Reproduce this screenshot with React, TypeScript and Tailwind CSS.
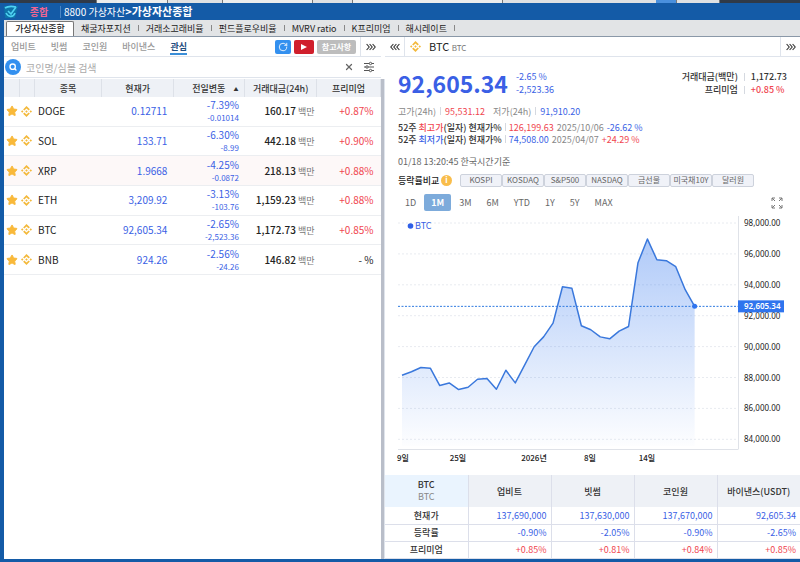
import { RotateCw, Search, Star, X } from "lucide-react";
import { SiBinance } from "react-icons/si";

const blue = "text-[#3a5fe5]";
const red = "text-[#f0464f]";

const menuTabs = [
  "채굴자포지션",
  "거래소고래비율",
  "펀드플로우비율",
  "MVRV ratio",
  "K프리미엄",
  "해시레이트",
];

const exchanges = ["업비트", "빗썸", "코인원", "바이낸스", "관심"];

const coins = [
  { name: "DOGE", price: "0.12711", rate: "-7.39%", diff: "-0.01014", volume: "160.17", premium: "+0.87%" },
  { name: "SOL", price: "133.71", rate: "-6.30%", diff: "-8.99", volume: "442.18", premium: "+0.90%" },
  { name: "XRP", price: "1.9668", rate: "-4.25%", diff: "-0.0872", volume: "218.13", premium: "+0.88%" },
  { name: "ETH", price: "3,209.92", rate: "-3.13%", diff: "-103.76", volume: "1,159.23", premium: "+0.88%" },
  { name: "BTC", price: "92,605.34", rate: "-2.65%", diff: "-2,523.36", volume: "1,172.73", premium: "+0.85%" },
  { name: "BNB", price: "924.26", rate: "-2.56%", diff: "-24.26", volume: "146.82", premium: "- %" },
];

const compareTargets = ["KOSPI", "KOSDAQ", "S&P500", "NASDAQ", "금선물", "미국채10Y", "달러원"];
const ranges = ["1D", "1M", "3M", "6M", "YTD", "1Y", "5Y", "MAX"];

const prices = [
  88150, 88370, 88650, 88600, 87480, 87650, 87220, 87370, 87890, 87930, 87240,
  88470, 87650, 88820, 89990, 90630, 91520, 93870, 93770, 91350, 91090, 90630,
  90505, 91000, 91300, 95430, 96960, 95620, 95560, 95170, 93680, 92605,
];

const dateLabels = [
  { x: 18, text: "9일" },
  { x: 73, text: "25일" },
  { x: 149, text: "2026년" },
  { x: 205, text: "8일" },
  { x: 262, text: "14일" },
];

const quotes = [
  { label: "현재가", values: ["137,690,000", "137,630,000", "137,670,000", "92,605.34"], color: blue },
  { label: "등락률", values: ["-0.90%", "-2.05%", "-0.90%", "-2.65%"], color: blue },
  { label: "프리미엄", values: ["+0.85%", "+0.81%", "+0.84%", "+0.85%"], color: red },
];

function TripleChevron({ flip = false }: { flip?: boolean }) {
  return (
    <svg
      viewBox="0 0 10 8"
      className={flip ? "h-2 w-2.5 rotate-180" : "h-2 w-2.5"}
      fill="none"
      stroke="#333"
      strokeWidth="1.1"
    >
      <path d="M.6 1l2.6 3-2.6 3M3.6 1l2.6 3-2.6 3M6.6 1l2.6 3-2.6 3" />
    </svg>
  );
}

function Bar() {
  return <span className="h-2 w-px bg-[#d5d9e0]" />;
}

function BackgroundStrip() {
  return (
    <div className="flex h-[3px] overflow-hidden bg-[#dfe1e3]">
      <div className="w-[12%] bg-[#303a48]" />
      <div className="w-[72px] border-x border-[#777] bg-[#eceded]" />
      <div className="w-[55px] border-r border-[#777]" />
      <div className="w-[90px] border-r border-[#777] bg-[#eceded]" />
      <div className="w-[40px] border-r border-[#777]" />
      <div className="w-[150px] border-r border-[#777] bg-[#eceded]" />
      <div className="flex-1" />
      <div className="w-5 bg-[#4a90dd]" />
      <div className="w-11 border-x border-[#777]" />
      <div className="w-[10%] bg-[#303a48]" />
    </div>
  );
}

function TitleBar() {
  return (
    <header className="flex h-[17px] items-center bg-[#145ba7] text-[10px] leading-none text-white">
      <svg viewBox="0 0 14 14" className="size-3.5" fill="none">
        <path d="M0 1h14L11 13H1z" fill="#0e74a8" />
        <path d="M1 3c3-2 7-2 11-1M2 8c2 4 7 5 9 0M4 6l3 3 5-7" stroke="#4fd2f2" strokeWidth="1.6" />
      </svg>
      <span className="w-[42px] text-center font-bold text-[#f06590]">종합</span>
      <span className="mr-[3px] h-3 w-px bg-[#4a86c4]" />
      <h1 className="flex items-center">
        8800 가상자산
        <span className="text-[11px] font-bold">&gt;가상자산종합</span>
      </h1>
    </header>
  );
}

function MenuTabs() {
  return (
    <nav className="flex h-[17px] items-center border-b border-[#8a98a8] bg-[#e2e4e6] pl-0.5 text-[9px] leading-none text-[#222]">
      <button className="h-[15px] w-[68px] rounded-t-xs border border-b-0 border-[#777] bg-white font-medium">
        가상자산종합
      </button>
      {menuTabs.map((tab) => (
        <button key={tab} className="flex h-full items-center gap-[7px] pl-[7px]">
          {tab}
          <span className="h-1.5 w-px bg-[#888]" />
        </button>
      ))}
    </nav>
  );
}

function CoinTable() {
  return (
    <table className="mt-px h-[196px] w-full table-fixed border-collapse text-[9px] leading-none">
      <colgroup>
        <col className="w-[4%]" />
        <col className="w-[4%]" />
        <col className="w-[18%]" />
        <col className="w-[19%]" />
        <col className="w-[19%]" />
        <col className="w-[19%]" />
        <col className="w-[17%]" />
      </colgroup>
      <thead>
        <tr className="h-[18px] bg-[#eef1f6] text-[#333] *:border-r *:border-[#dde1e8] *:font-medium">
          <th />
          <th />
          <th>종목</th>
          <th>현재가</th>
          <th>
            <span className="flex items-center justify-end gap-2 pr-1.5">
              전일변동
              <span className="text-[5px]">▲</span>
            </span>
          </th>
          <th className="whitespace-nowrap">거래대금(24h)</th>
          <th>프리미엄</th>
        </tr>
      </thead>
      <tbody>
        {coins.map((coin) => (
          <tr
            key={coin.name}
            className={
              coin.name === "XRP"
                ? "border-b border-[#eceef1] bg-[#fdf8f8]"
                : "border-b border-[#eceef1]"
            }
          >
            <td>
              <Star className="mx-auto size-3 fill-[#f9b93a] text-[#f9b93a]" />
            </td>
            <td>
              <SiBinance className="mx-auto size-[11px] text-[#f3b93c]" />
            </td>
            <td className="pl-1 text-[10px] text-[#222]">{coin.name}</td>
            <td className={`pr-1.5 text-right text-[10px] ${blue}`}>{coin.price}</td>
            <td className={`pr-1.5 text-right ${blue}`}>
              <div className="text-[10px] leading-[14px]">{coin.rate}</div>
              <div className="text-[8px] leading-3">{coin.diff}</div>
            </td>
            <td className="pr-0.5 text-right whitespace-nowrap">
              <span className="text-[10px] font-medium text-[#222]">{coin.volume}</span>
              <span className="ml-0.5 text-[#777]">백만</span>
            </td>
            <td className={`pr-[7px] text-right text-[10px] ${coin.premium === "- %" ? "text-[#222]" : red}`}>
              {coin.premium}
            </td>
          </tr>
        ))}
      </tbody>
    </table>
  );
}

function CoinListPanel() {
  return (
    <section className="flex min-w-0 flex-col bg-white">
      <div className="flex h-5 items-center border-b border-[#dfe4ec] text-[9px] leading-none">
        <nav className="flex h-full flex-1 items-center gap-[15px] pl-[7px] font-medium text-[#999]">
          {exchanges.map((name) => (
            <button
              key={name}
              className={
                name === "관심"
                  ? "h-4 border-b-2 border-[#3a8ed8] pt-0.5 font-bold text-[#1f4e80]"
                  : "h-4 border-b-2 border-transparent pt-0.5"
              }
            >
              {name}
            </button>
          ))}
        </nav>
        <div className="flex items-center gap-[3px] pr-1">
          <button aria-label="새로고침" className="grid h-3.5 w-4 place-items-center rounded-xs bg-[#3390ef] text-white">
            <RotateCw className="size-2.5" />
          </button>
          <button aria-label="동영상" className="grid h-3.5 w-5 place-items-center rounded-xs bg-[#d01f2c]">
            <svg viewBox="0 0 6 6" className="size-1.5" fill="#fff">
              <path d="M0 0l6 3-6 3z" />
            </svg>
          </button>
          <button className="h-3.5 w-[39px] rounded-xs bg-[#bdbdbd] text-[8px] font-bold text-white">
            참고사항
          </button>
        </div>
        <button aria-label="펼치기" className="grid h-full w-[21px] place-items-center border-l border-[#dfe4ec]">
          <TripleChevron />
        </button>
      </div>

      <div className="flex h-[21px] items-center gap-[5px] border-b border-[#dfe4ec] pr-1.5 pl-px">
        <button aria-label="검색" className="grid size-4 place-items-center rounded-full bg-[#3390ef] text-white">
          <Search className="size-2" strokeWidth={4} />
        </button>
        <input
          aria-label="코인명/심볼 검색"
          placeholder="코인명/심볼 검색"
          className="min-w-0 flex-1 text-[10px] leading-none placeholder:text-[#aaa]"
        />
        <button aria-label="지우기">
          <X className="size-2.5 text-[#666]" strokeWidth={3} />
        </button>
        <button aria-label="필터" className="ml-1">
          <svg viewBox="0 0 12 12" className="size-3" fill="#fff" stroke="#555">
            <path d="M1 2.5h10M1 6h10M1 9.5h10" />
            <circle cx="7.5" cy="2.5" r="1.2" />
            <circle cx="4" cy="6" r="1.2" />
            <circle cx="7.5" cy="9.5" r="1.2" />
          </svg>
        </button>
      </div>

      <div className="flex-1">
        <CoinTable />
      </div>
    </section>
  );
}

function PriceSummary() {
  return (
    <div className="px-[13px] pt-3 text-[9px] leading-none">
      <div className="flex items-center">
        <strong className={`text-[23px] leading-[28px] font-bold ${blue}`}>92,605.34</strong>
        <div className={`ml-2 leading-[13px] ${blue}`}>
          <div>-2.65 %</div>
          <div>-2,523.36</div>
        </div>
        <dl className="ml-auto grid grid-cols-[auto_1px_auto] items-center gap-x-1.5 leading-[13px] font-medium text-[#333]">
          <dt className="text-right">거래대금(백만)</dt>
          <Bar />
          <dd>1,172.73</dd>
          <dt className="text-right">프리미엄</dt>
          <Bar />
          <dd className={red}>+0.85 %</dd>
        </dl>
      </div>

      <div className="mt-2 flex h-3 items-center gap-1 text-[#888]">
        고가(24h) <Bar /> <span className={`mr-1 ${red}`}>95,531.12</span>
        저가(24h) <Bar /> <span className={blue}>91,910.20</span>
      </div>

      <div className="mt-1 text-[#333]">
        <div className="flex h-3 items-center gap-[3px]">
          <span className="font-medium">
            52주 <span className={red}>최고가</span>(일자) 현재가%
          </span>
          <Bar />
          <span className={red}>126,199.63</span>
          <span className="text-[#888]">2025/10/06</span>
          <span className={blue}>-26.62 %</span>
        </div>
        <div className="flex h-3 items-center gap-[3px]">
          <span className="font-medium">
            52주 <span className={blue}>최저가</span>(일자) 현재가%
          </span>
          <Bar />
          <span className={blue}>74,508.00</span>
          <span className="text-[#888]">2025/04/07</span>
          <span className={red}>+24.29 %</span>
        </div>
      </div>

      <div className="mt-3 h-3 text-[#666]">01/18 13:20:45 한국시간기준</div>
    </div>
  );
}

function ChartControls() {
  return (
    <div className="px-[13px] leading-none text-[#666]">
      <div className="mt-1 flex h-3.5 items-center">
        <span className="w-[43px] text-[9px] font-medium whitespace-nowrap text-[#222]">등락률비교</span>
        <button aria-label="안내" className="mr-2 grid size-[11px] place-items-center rounded-full bg-[#f9bd4b] text-[8px] font-bold text-white">
          i
        </button>
        {compareTargets.map((name) => (
          <button key={name} className="h-[13px] w-[42px] rounded-xs border border-[#cdd2dc] bg-[#f0f2f8] text-[8px] whitespace-nowrap">
            {name}
          </button>
        ))}
      </div>
      <div className="mt-[7px] flex h-[17px] items-center gap-px text-[9px]">
        {ranges.map((range) => (
          <button
            key={range}
            className={
              range === "1M"
                ? "h-full rounded-xs bg-[#7dabdb] px-[7px] font-bold text-white"
                : "h-full px-[7px]"
            }
          >
            {range}
          </button>
        ))}
        <button aria-label="전체화면" className="mr-1 ml-auto">
          <svg viewBox="0 0 12 12" className="size-3" fill="none" stroke="#777">
            <path d="M1 4V1h3M1 1l3 3M8 1h3v3M11 1L8 4M1 8v3h3M1 11l3-3M11 8v3H8M11 11L8 8" />
          </svg>
        </button>
      </div>
    </div>
  );
}

const toX = (i: number) => 17 + i * 9.44;
const toY = (price: number) => 8 + ((98000 - price) / 2000) * 30.9;

function PriceChart() {
  const line = prices.map((p, i) => `${toX(i)},${toY(p)}`).join(" ");
  const lastX = toX(prices.length - 1);
  const lastY = toY(92605);
  return (
    <svg viewBox="0 0 415 260" className="mt-1 block h-auto w-full" role="img" aria-label="BTC 차트">
      <defs>
        <linearGradient id="area" x1="0" y1="0" x2="0" y2="1">
          <stop offset="0" stopColor="#2f74ee" stopOpacity="0.38" />
          <stop offset="1" stopColor="#2f74ee" stopOpacity="0.01" />
        </linearGradient>
      </defs>
      {[98, 96, 94, 92, 90, 88, 86, 84].map((k) => (
        <g key={k}>
          <line x1="13" x2="353" y1={toY(k * 1000)} y2={toY(k * 1000)} stroke="#e8ebf0" strokeDasharray="2 2" />
          <text x="359" y={toY(k * 1000) + 3} className="fill-[#222] font-['Noto_Sans'] text-[8px]">
            {k},000.00
          </text>
        </g>
      ))}
      <path d="M353.5 1V234M13 234.5H353.5" stroke="#dfe2e8" />
      <polygon points={`17,231 ${line} ${lastX},231`} fill="url(#area)" />
      <line x1="13" x2="353" y1={lastY} y2={lastY} stroke="#2f7ae0" strokeDasharray="2 1.5" />
      <polyline points={line} fill="none" stroke="#3a78dc" strokeWidth="1.5" strokeLinejoin="round" />
      <circle cx={lastX} cy={lastY} r="2.5" fill="#2f74ee" />
      <rect x="353" y={lastY - 6} width="46" height="12" fill="#2f74ee" />
      <text x="359" y={lastY + 3} className="fill-white font-['Noto_Sans'] text-[8px] font-semibold">
        92,605.34
      </text>
      <circle cx="25.5" cy="11" r="2.8" fill="#2f5fe8" />
      <text x="30" y="14" className="fill-[#3a5fe5] text-[9px]">
        BTC
      </text>
      {dateLabels.map((d) => (
        <text key={d.text} x={d.x} y="246" textAnchor="middle" className="fill-[#222] text-[8px] font-medium">
          {d.text}
        </text>
      ))}
    </svg>
  );
}

function QuoteTable() {
  return (
    <table className="w-full table-fixed border-collapse text-[9px] leading-none text-[#333]">
      <thead>
        <tr className="h-8 bg-[#eef1f6] *:font-medium">
          <th className="bg-[#eaf4fe] leading-3">
            <div>BTC</div>
            <div className="font-normal text-[#888]">BTC</div>
          </th>
          {["업비트", "빗썸", "코인원", "바이낸스(USDT)"].map((name) => (
            <th key={name} className="border-l border-[#dcdfea] whitespace-nowrap">
              {name}
            </th>
          ))}
        </tr>
      </thead>
      <tbody>
        {quotes.map((row) => (
          <tr key={row.label} className="h-[17px] border-b border-[#dcdfea]">
            <th className="font-medium">{row.label}</th>
            {row.values.map((value, i) => (
              <td key={i} className={`border-l border-[#dcdfea] pr-1 text-right ${row.color}`}>
                {value}
              </td>
            ))}
          </tr>
        ))}
      </tbody>
    </table>
  );
}

function DetailPanel() {
  return (
    <section className="min-w-0 bg-white">
      <div className="flex h-5 items-center border-b border-[#dfe4ec]">
        <button aria-label="접기" className="grid h-full w-5 place-items-center border-r border-[#dfe4ec]">
          <TripleChevron flip />
        </button>
        <div className="flex flex-1 items-center pl-[5px]">
          <SiBinance className="size-[11px] text-[#f3b93c]" />
          <h2 className="ml-2 text-[11px] leading-none text-[#222]">
            BTC <span className="text-[8px] text-[#777]">BTC</span>
          </h2>
        </div>
        <button aria-label="더보기" className="grid h-full w-5 place-items-center border-l border-[#dfe4ec]">
          <TripleChevron />
        </button>
      </div>
      <PriceSummary />
      <ChartControls />
      <PriceChart />
      <QuoteTable />
    </section>
  );
}

export default function App() {
  return (
    <div className="flex min-h-screen flex-col font-['Noto_Sans_CJK_KR',sans-serif]">
      <BackgroundStrip />
      <div className="flex flex-1 flex-col border-b-3 border-l-4 border-[#145ba7]">
        <TitleBar />
        <MenuTabs />
        <main className="grid flex-1 grid-cols-[377fr_4px_415fr] bg-white">
          <CoinListPanel />
          <div className="mt-[42px] border-r border-[#dfe4ec] bg-[#b9bec9]" />
          <DetailPanel />
        </main>
      </div>
    </div>
  );
}
